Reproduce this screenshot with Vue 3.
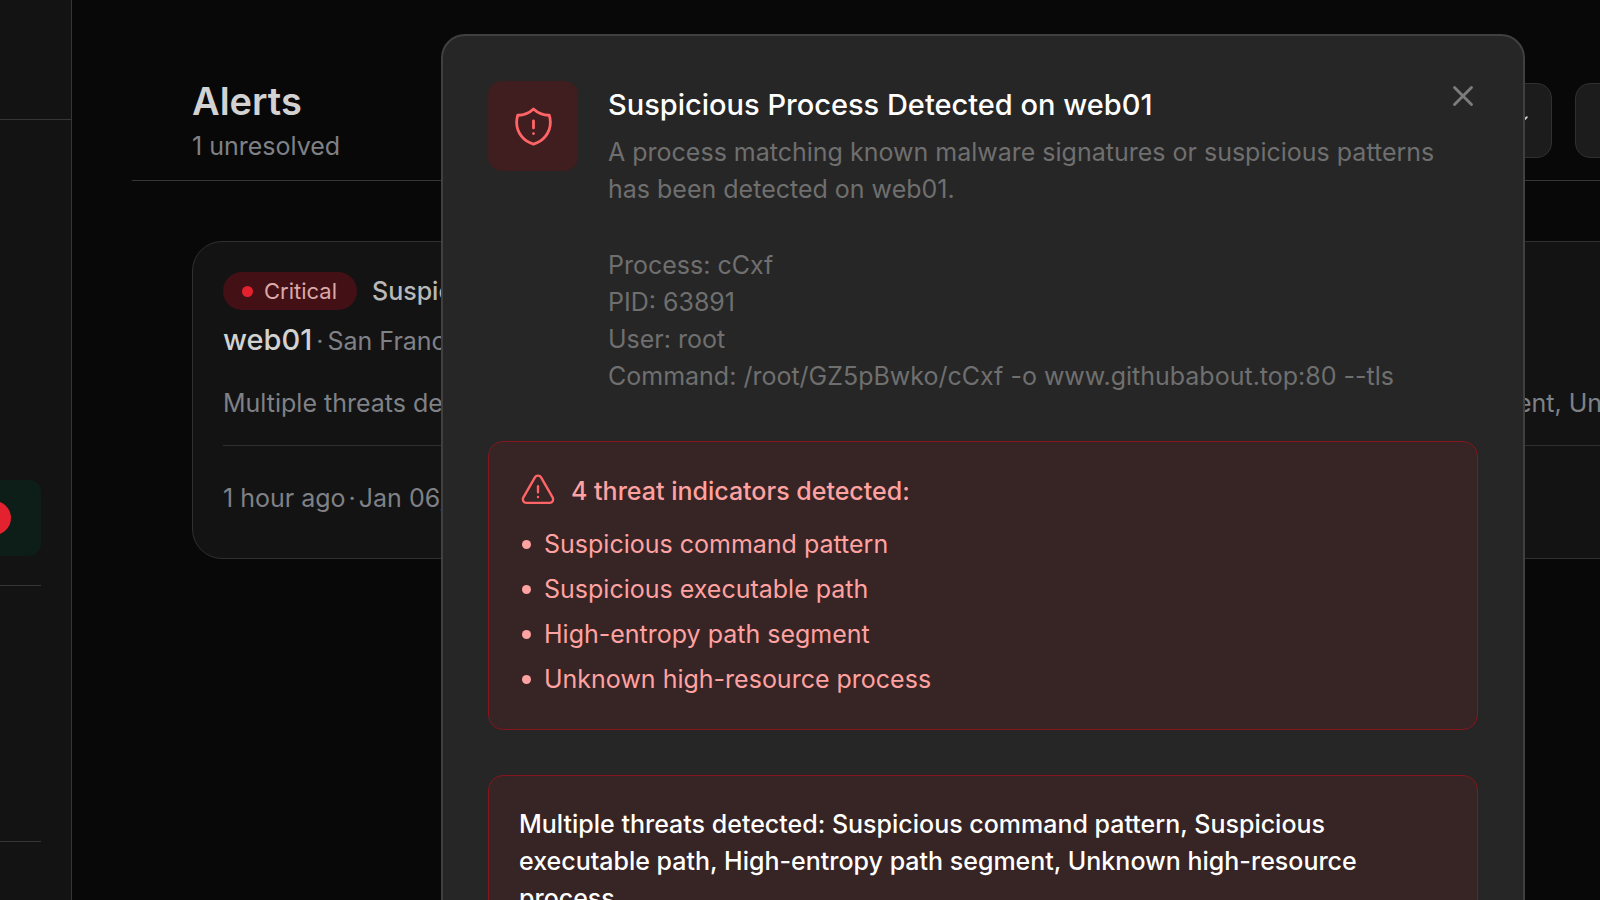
<script setup>
const indicators = [
  'Suspicious command pattern',
  'Suspicious executable path',
  'High-entropy path segment',
  'Unknown high-resource process',
]
const summary =
  'Multiple threats detected: Suspicious command pattern, Suspicious executable path, High-entropy path segment, Unknown high-resource process'
const processInfo = [
  'Process: cCxf',
  'PID: 63891',
  'User: root',
  'Command: /root/GZ5pBwko/cCxf -o www.githubabout.top:80 --tls',
]
</script>

<template>
  <div class="app">
    <aside class="sidebar">
      <div class="brand"></div>
      <nav class="nav">
        <a href="#" class="nav-item" aria-label="Alerts"><span class="count"></span></a>
        <div class="nav-group"></div>
      </nav>
    </aside>

    <main class="main">
      <header class="page-head">
        <div>
          <h1>Alerts</h1>
          <p class="sub">1 unresolved</p>
        </div>
        <div class="actions">
          <button type="button" class="action" aria-label="Filter">
            <svg viewBox="0 0 24 24" width="30" height="30"><path d="M19 9l-7 7-7-7" /></svg>
          </button>
          <button type="button" class="action" aria-label="Resolve">
            <svg viewBox="0 0 24 24" width="30" height="30"><path d="M4 17l5 5L20 6" /></svg>
          </button>
        </div>
      </header>

      <article class="card">
        <div class="card-top">
          <span class="pill"><i class="dot"></i>Critical</span>
          <strong>Suspicious Process</strong>
        </div>
        <div class="server"><b>web01</b><span>·</span><span>San Francisco</span></div>
        <p class="card-text">{{ summary }}</p>
        <footer class="card-foot"><span>1 hour ago</span><span>·</span><span>Jan 06, 2026</span></footer>
      </article>
    </main>

    <div class="overlay">
      <section class="modal" role="dialog" aria-modal="true" aria-labelledby="dialog-title">
        <button type="button" class="close" aria-label="Close">
          <svg viewBox="0 0 24 24" width="34" height="34"><path d="M6 18 18 6M6 6l12 12" /></svg>
        </button>

        <div class="intro">
          <div class="tile">
            <svg viewBox="0 0 24 24" width="45" height="45">
              <path
                d="M12 9v3.75m0-10.036A11.959 11.959 0 0 1 3.598 6 11.99 11.99 0 0 0 3 9.75c0 5.592 3.824 10.29 9 11.622 5.176-1.332 9-6.03 9-11.622 0-1.31-.21-2.57-.598-3.75h-.152c-3.196 0-6.1-1.25-8.25-3.286Zm0 13.036h.008v.008H12v-.008Z"
              />
            </svg>
          </div>
          <div class="intro-text">
            <h2 id="dialog-title">Suspicious Process Detected on web01</h2>
            <p>A process matching known malware signatures or suspicious patterns has been detected on web01.</p>
            <div class="details">
              <div v-for="line in processInfo" :key="line">{{ line }}</div>
            </div>
          </div>
        </div>

        <div class="box">
          <h3>
            <svg viewBox="0 0 24 24" width="38" height="38">
              <path
                d="M12 9v3.75m-9.303 3.376c-.866 1.5.217 3.374 1.948 3.374h14.71c1.73 0 2.813-1.874 1.948-3.374L13.949 3.378c-.866-1.5-3.032-1.5-3.898 0L2.697 16.126ZM12 15.75h.007v.008H12v-.008Z"
              />
            </svg>
            4 threat indicators detected:
          </h3>
          <ul>
            <li v-for="item in indicators" :key="item">{{ item }}</li>
          </ul>
        </div>

        <div class="box summary">
          <p>{{ summary }}</p>
        </div>
      </section>
    </div>
  </div>
</template>

<style>
body {
  background: #080808;
  overflow: hidden;
}
</style>

<style scoped>
.app {
  position: relative;
  display: flex;
  height: 100vh;
  overflow: hidden;
  background: #080808;
  font-family: Inter, "Liberation Sans", sans-serif;
  font-size: 25px;
  line-height: 37px;
  color: #7f8186;
}
.app * {
  box-sizing: border-box;
}
h1, h2, h3, p, ul {
  margin: 0;
  padding: 0;
}
svg {
  flex: none;
  display: block;
  fill: none;
  stroke: currentColor;
  stroke-width: 1.5;
  stroke-linecap: round;
  stroke-linejoin: round;
}
button {
  font: inherit;
  cursor: pointer;
}

/* Sidebar */
.sidebar {
  flex: none;
  width: 72px;
  background: #131313;
  border-right: 1px solid #363636;
}
.brand {
  height: 120px;
  border-bottom: 1px solid #363636;
}
.nav {
  padding: 360px 30px 0 0;
}
.nav-item {
  display: flex;
  align-items: center;
  height: 76px;
  border-radius: 0 12px 12px 0;
  background: #0d1d18;
}
.count {
  width: 34px;
  height: 34px;
  margin-left: -23px;
  border-radius: 50%;
  background: #e4222f;
}
.nav-group {
  height: 257px;
  margin-top: 29px;
  border-top: 1px solid #363636;
  border-bottom: 1px solid #363636;
}

/* Page */
.main {
  flex: 1;
  min-width: 0;
  padding-left: 60px;
  overflow: hidden;
}
.page-head {
  display: flex;
  justify-content: space-between;
  padding: 79px 0 15px 60px;
  border-bottom: 1px solid #363636;
}
h1 {
  font-size: 38px;
  line-height: 45px;
  font-weight: 600;
  color: #d2d2d2;
}
.sub {
  margin-top: 4px;
}
.actions {
  display: flex;
  gap: 23px;
  margin: 4px -95px 0 0;
}
.action {
  display: flex;
  align-items: center;
  justify-content: flex-end;
  width: 120px;
  height: 75px;
  padding: 0 18px;
  border: 1px solid #303030;
  border-radius: 15px;
  background: #1c1c1c;
  color: #d2d2d2;
}
.action + .action {
  justify-content: flex-start;
  padding: 0 20px;
}
.card {
  margin: 60px -60px 0 60px;
  padding: 30px;
  border: 1px solid #303030;
  border-radius: 30px;
  background: #131313;
  white-space: nowrap;
}
.card-top {
  display: flex;
  align-items: center;
  gap: 15px;
}
.card-top strong {
  font-weight: 500;
  color: #b8b8b8;
}
.pill {
  display: flex;
  align-items: center;
  gap: 11px;
  height: 38px;
  padding: 0 20px 0 19px;
  border-radius: 19px;
  background: #431115;
  color: #dba9a9;
  font-size: 22px;
}
.dot {
  width: 11px;
  height: 11px;
  border-radius: 50%;
  background: #e4222f;
}
.server {
  display: flex;
  align-items: baseline;
  gap: 4px;
  margin-top: 11px;
}
.server b {
  font-size: 29px;
  font-weight: 500;
  color: #d2d2d2;
}
.card-text {
  margin-top: 25px;
  padding-bottom: 23px;
  border-bottom: 1px solid #303030;
}
.card-foot {
  display: flex;
  gap: 3px;
  padding: 34px 0 11px;
}

/* Dialog */
.overlay {
  position: absolute;
  inset: 0;
  display: flex;
  align-items: flex-start;
  padding: 34px 75px 0 441px;
}
.modal {
  position: relative;
  flex: 1;
  min-width: 0;
  min-height: 1000px;
  padding: 45px;
  border: 2px solid #404040;
  border-radius: 24px;
  background: #262626;
  color: #6f6f6f;
}
.close {
  position: absolute;
  top: 43px;
  right: 43px;
  padding: 0;
  border: 0;
  background: none;
  color: #7c7c7c;
}
.close svg {
  stroke-width: 2;
}
.intro {
  display: flex;
  gap: 30px;
}
.tile {
  flex: none;
  display: flex;
  align-items: center;
  justify-content: center;
  width: 90px;
  height: 90px;
  border-radius: 14px;
  background: #401e20;
  color: #ff6467;
}
.intro-text {
  padding-top: 5px;
}
h2 {
  font-size: 29px;
  line-height: 38px;
  font-weight: 500;
  color: #fff;
}
.intro-text p {
  margin-top: 10px;
}
.details {
  margin-top: 39px;
}
.box {
  margin-top: 46px;
  padding: 30px;
  border: 1px solid #85161e;
  border-radius: 15px;
  background: #372424;
  color: #ffa2a2;
}
.box h3 {
  display: flex;
  align-items: center;
  gap: 14px;
  font-size: 25px;
  line-height: 38px;
  font-weight: 500;
}
.box h3 svg {
  color: #ff6467;
}
.box ul {
  display: grid;
  gap: 8px;
  margin: 16px 0 1px;
  padding-left: 3px;
  list-style: none;
}
.box li {
  display: flex;
  align-items: center;
  gap: 13px;
}
.box li::before {
  content: "";
  width: 9px;
  height: 9px;
  border-radius: 50%;
  background: currentColor;
}
.box.summary {
  margin-top: 45px;
  color: #fff;
  font-weight: 500;
}
</style>
